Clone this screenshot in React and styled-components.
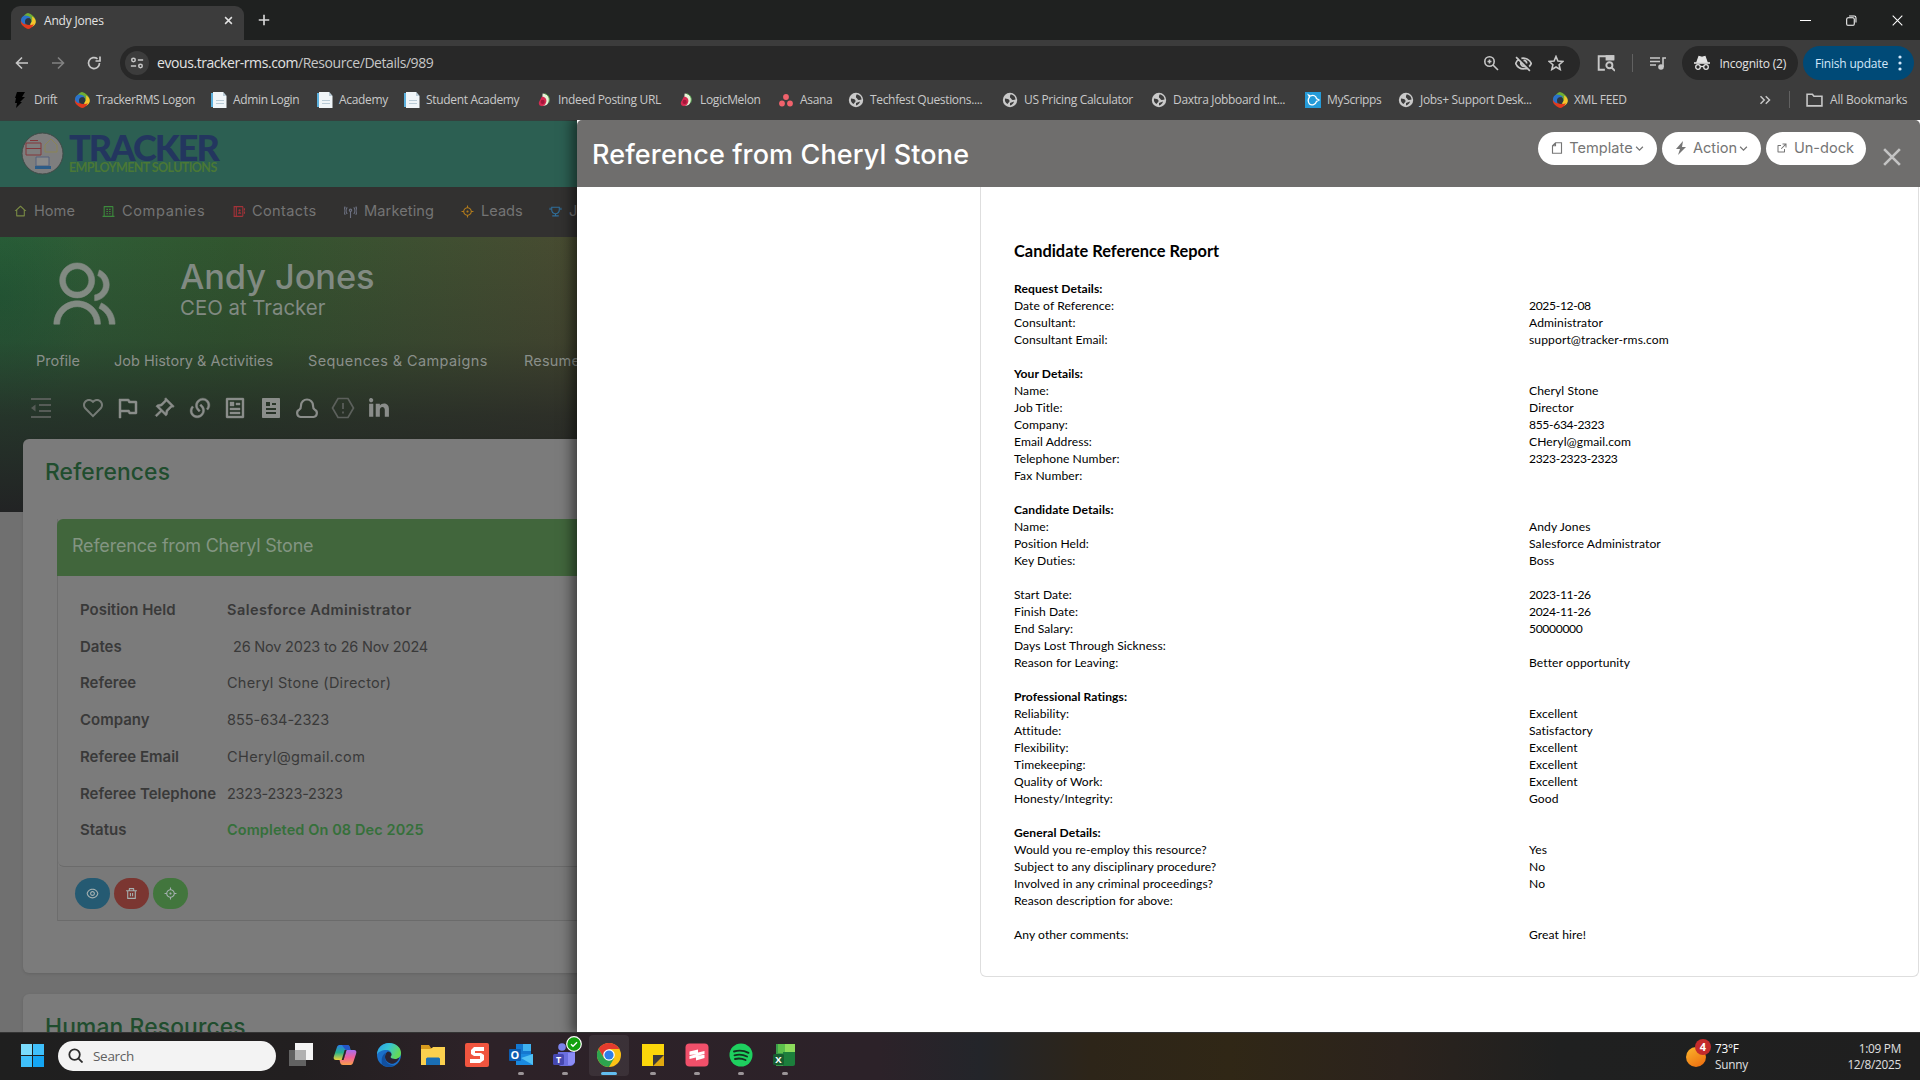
import React from "react";
import styled, { createGlobalStyle } from "styled-components";
import {
  RiGroupLine, RiHeartLine, RiFlagLine, RiPushpinLine, RiArticleLine, RiArticleFill,
  RiLinkedinFill, RiEyeLine, RiDeleteBinLine, RiExternalLinkLine, RiTrophyLine, RiLinksLine,
  RiFocus3Line, RiContactsBookLine, RiBuilding4Line, RiHome2Line,
} from "react-icons/ri";

const ui = `"Open Sans", "Noto Sans", sans-serif`;
const brand = `Inter, "Open Sans", sans-serif`;
const doc = `Lato, "Open Sans", sans-serif`;

const Global = createGlobalStyle`
  * { box-sizing: border-box; }
  body { margin: 0; background: #1f2020; overflow: hidden; }
  svg { display: block; flex: none; }
`;

const Screen = styled.div`
  width: 1920px; height: 1080px; display: flex; flex-direction: column;
  overflow: hidden; font-family: ${ui}; white-space: nowrap;
`;

/* ---------- browser chrome ---------- */
const TabStrip = styled.header`
  height: 40px; flex: none; background: #1f2120; display: flex; align-items: flex-end; padding-left: 11px;
`;
const Tab = styled.div`
  width: 233px; height: 34px; background: #3c3c3c; border-radius: 9px 9px 0 0; color: #e3e3e3;
  display: flex; align-items: center; padding: 0 11px 5px 9px; font-size: 12px; letter-spacing: -0.2px;
  svg:last-child { margin-left: auto; }
`;
const TabTitle = styled.span`margin-left: 8px;`;
const NewTab = styled.div`height: 40px; margin-left: 14px; display: flex; align-items: center;`;
const WindowButtons = styled.div`
  margin-left: auto; height: 40px; width: 138px; display: flex; align-items: center; gap: 35px;
  padding-left: 18px;
`;
const Toolbar = styled.div`
  height: 46px; flex: none; background: #3c3c3c; display: flex; align-items: center; padding: 0 6px 0 14px;
`;
const NavButton = styled.div`width: 16px; flex: none; margin-right: 20px; opacity: ${(p) => (p.$off ? 0.5 : 1)};`;
const AddressBar = styled.div`
  width: 1460px; height: 34px; flex: none; margin-left: -2px; border-radius: 17px; background: #282828; display: flex; align-items: center;
  padding: 0 16px 0 5px; color: #e3e3e3; font-size: 14px; letter-spacing: -0.43px;
`;
const SiteInfo = styled.div`
  width: 24px; height: 24px; border-radius: 50%; background: #3c3c3c; display: grid; place-items: center; margin-right: 8px;
`;
const Url = styled.span`padding-bottom: 2px;`;
const UrlPath = styled.span`color: #c7c7c7;`;
const AddressActions = styled.div`margin-left: auto; display: flex; gap: 16px;`;
const Rule = styled.i`width: 1px; height: ${(p) => p.$h}px; margin-left: ${(p) => p.$ml || 0}px; background: #616161; flex: none;`;
const ToolIcons = styled.div`display: flex; flex: none; align-items: center; gap: 17px; margin-left: 17px; width: 85px;`;
const Pill = styled.div`
  height: 34px; width: ${(p) => p.$w}px; flex: none; border-radius: 17px; background: ${(p) => p.$bg};
  display: flex; align-items: center; justify-content: space-between; padding: 0 ${(p) => p.$pad}px; color: ${(p) => p.$ink};
  font-size: 12px; letter-spacing: -0.2px;
  & + & { margin-left: 5px; }
`;
const Bookmarks = styled.div`
  height: 34px; flex: none; background: #3c3c3c; display: flex; align-items: center; padding: 0 0 7px 12px;
  color: #c9c9c9; font-size: 12px; letter-spacing: -0.33px;
`;
const Bookmark = styled.div`width: ${(p) => p.$w}px; display: flex; align-items: center; gap: 6px; flex: none;`;
const BookmarkEnd = styled.div`margin-left: auto; display: flex; align-items: center; width: 161px;`;
const AllBookmarks = styled.div`display: flex; align-items: center; gap: 7px; margin-left: 16px; letter-spacing: -0.2px;`;

/* ---------- application ---------- */
const AppArea = styled.main`height: 912px; flex: none; display: flex; overflow: hidden; background: #707070; font-family: ${brand};`;
const Behind = styled.section`width: 577px; height: 912px; flex: none; overflow: hidden; display: flex; flex-direction: column;`;
const BrandBar = styled.div`height: 67px; flex: none; background: #2c5f52; border-top: 1px solid #35403d; display: flex; align-items: center; padding: 0 0 1px 21px;`;
const BrandWords = styled.div`margin-left: 5px; display: flex; flex-direction: column;`;
const BrandName = styled.div`font: 900 36px/29px ${doc}; letter-spacing: -1.9px; color: #23365f;`;
const BrandSub = styled.div`font: 700 12.5px/12px ${doc}; letter-spacing: -0.6px; color: #4a7836;`;
const MainNav = styled.nav`height: 50px; flex: none; background: #323130; display: flex; align-items: center; padding: 0 0 2px 14px; color: #747474; font-size: 14.6px; letter-spacing: 0.1px;`;
const NavItem = styled.div`width: ${(p) => p.$w}px; flex: none; display: flex; align-items: center; gap: 7px; letter-spacing: ${(p) => p.$ls || 0}px; svg { color: ${(p) => p.$c}; }`;
const Banner = styled.div`
  height: 275px; flex: none; display: flex; flex-direction: column; color: #818a82;
  background:
    linear-gradient(180deg, rgba(34,35,36,0) 0%, rgba(34,35,36,0.22) 38%, rgba(34,35,36,0.7) 65%, #222324 100%),
    radial-gradient(ellipse 90px 120px at 0 60px, rgba(32,88,52,0.8), transparent),
    linear-gradient(90deg, #2d5f39 0%, #31562f 40%, #3d5031 70%, #484b31 100%);
`;
const Person = styled.div`display: flex; padding: 20px 0 0 48px; height: 109px; > svg { margin-top: 3px; }`;
const PersonText = styled.div`margin-left: 62px;`;
const PersonName = styled.div`font-size: 34.4px; font-weight: 500; line-height: 40px; letter-spacing: -0.1px;`;
const PersonRole = styled.div`font-size: 20.4px; line-height: 24px; margin-top: -1px;`;
const SubTabs = styled.div`display: flex; padding-left: 36px; font-size: 14.5px; line-height: 30px; color: #8a8f8a;`;
const SubTab = styled.span`width: ${(p) => p.$w}px; flex: none; letter-spacing: ${(p) => p.$ls || 0}px;`;
const QuickIcons = styled.div`
  display: flex; align-items: center; gap: 11.7px; padding: 19px 0 0 29px; color: #8a8d8a;
  svg:first-child { margin-right: 16px; }
`;
const Cards = styled.div`margin: -73px 0 0 23px; display: flex; flex-direction: column; gap: 21px;`;
const Card = styled.div`
  height: ${(p) => p.$h}px; flex: none; width: 600px; background: #7b7b7b; border-radius: 6px; padding: 17px 0 0 22px;
  box-shadow: 0 1px 3px rgba(0,0,0,0.12);
`;
const CardTitle = styled.h2`margin: 0; font-size: 22.8px; line-height: 32px; font-weight: 500; color: #204d2e; letter-spacing: 0.15px;`;
const RefBox = styled.div`margin: 31px 0 0 12px; width: 570px; border-left: 1px solid #6d6d6d;`;
const RefHead = styled.div`margin-left: -1px; height: 57px; background: #41663c; border-radius: 6px 0 0 0; padding-left: 15px; font-size: 18px; line-height: 53px; letter-spacing: -0.2px; color: #839582;`;
const RefBody = styled.dl`margin: 0; height: 291px; padding: 16px 0 0 22px; border-bottom: 1px solid #6b6b6b; border-radius: 0 0 0 6px;`;
const RefRow = styled.div`
  display: grid; grid-template-columns: 147px 1fr; font-size: 14.5px; line-height: 36.7px; color: #393939;
  dt { font-weight: 600; font-size: 15px; letter-spacing: 0; }
  dd {
    margin: 0; font-weight: ${(p) => (p.$strong ? 600 : 400)}; color: ${(p) => p.$c || "#393939"};
    padding-left: ${(p) => p.$in || 0}px; letter-spacing: ${(p) => p.$ls || 0}px;
  }
`;
const RefFoot = styled.div`height: 54px; display: flex; gap: 4px; padding: 11px 0 0 17px; border-bottom: 1px solid #6b6b6b; background: #797979;`;
const RoundBtn = styled.div`width: 35px; height: 31px; border-radius: 16px; background: ${(p) => p.$c}; color: #a5b0b0; display: grid; place-items: center;`;

/* ---------- docked panel ---------- */
const Panel = styled.section`
  width: 1343px; height: 912px; flex: none; background: #fff; position: relative;
  box-shadow: -2px 0 12px 3px rgba(0,0,0,0.5); display: flex; flex-direction: column;
`;
const PanelHead = styled.div`
  height: 67px; flex: none; background: #6f6e6d; border-radius: 5px 5px 0 0; display: flex; padding-left: 15px; color: #fff;
`;
const PanelTitle = styled.h1`margin: 0; font-size: 27px; line-height: 70px; font-weight: 500; letter-spacing: 0.12px;`;
const PanelActions = styled.div`margin-left: auto; display: flex; gap: 5px; padding: 12px 19px 0 0;`;
const PanelBtn = styled.div`
  width: ${(p) => p.$w}px; height: 33px; border-radius: 17px; background: #fff; color: #757575; display: flex;
  align-items: center; justify-content: center; font-size: 14.6px; padding-bottom: 1px;
`;
const BtnLabel = styled.span`margin: 0 2px 0 6px; padding-bottom: 1px;`;
const CloseMark = styled.div`margin: 16px 0 0 12px;`;
const Report = styled.article`
  margin-left: 403px; width: 939px; height: 790px; border: 1px solid #dedede; border-top: 0; border-radius: 0 0 6px 6px;
  padding: 51px 0 0 33px; color: #000; font-family: ${doc};
`;
const ReportTitle = styled.h3`margin: 0 0 16px; font-size: 16.4px; line-height: 26px; font-weight: 700;`;
const Line = styled.div`
  display: grid; grid-template-columns: 515px 1fr; height: 17px; line-height: 17px; font-size: 12.1px; letter-spacing: 0.07px;
  font-weight: ${(p) => (p.$head ? 700 : 400)};
`;
const Value = styled.span`letter-spacing: ${(p) => (p.$digits ? "-0.33px" : "0.1px")};`;

/* ---------- taskbar ---------- */
const Taskbar = styled.footer`
  height: 48px; flex: none; display: flex; align-items: center; padding: 0 19px 2px 21px; border-top: 1px solid #343434;
  background: linear-gradient(90deg, #1f1f1f 0, #221f20 300px, #2d2228 480px, #2c2229 880px, #23252a 980px, #2d2519 1090px, #302716 1230px, #2b231d 1400px, #1f2020 1560px, #1f1f1f 100%);
`;
const SearchBox = styled.div`
  width: 218px; height: 30px; margin: 0 5px 0 14px; border-radius: 15px; background: #f3f3f3; display: flex; align-items: center;
  gap: 10px; padding-left: 10px; font-size: 13.5px; letter-spacing: -0.3px; color: #5f5f5f;
`;
const TaskApps = styled.div`display: flex; gap: 4px;`;
const TaskApp = styled.div`
  width: 40px; height: 41px; border-radius: 4px; display: flex; flex-direction: column; align-items: center; padding-top: 8px; position: relative;
  background: ${(p) => (p.$on ? "rgba(255,255,255,.07)" : "none")};
`;
const Running = styled.i`width: ${(p) => (p.$on ? 16 : 6)}px; height: 3px; border-radius: 2px; background: ${(p) => (p.$on ? "#62bdf0" : "#9b9598")}; margin-top: 5px;`;
const Tick = styled.div`position: absolute; left: 21px; top: 1px;`;
const Weather = styled.div`margin-left: auto; display: flex; align-items: center; gap: 4px;`;
const Stack = styled.div`
  font-size: 11.8px; line-height: 16px; color: #e0e0e0; letter-spacing: -0.25px; text-align: ${(p) => p.$a || "left"};
  width: ${(p) => p.$w}px; strong { font-weight: 500; color: #fff; }
`;

/* ---------- drawings ---------- */
const L = ({ s = 16, w = 1.6, c = "#c7c7c7", v = 16, children }) => (
  <svg width={s} height={s} viewBox={`0 0 ${v} ${v}`} fill="none" stroke={c} strokeWidth={w}>{children}</svg>
);
const TrackerIcon = () => (
  <svg width="16" height="16" viewBox="0 0 16 16">
    <path d="M8 0C11.500 1 15.500 4 15.800 8c0 2-1.200 4-2.800 5.200L10.200 10.500C12 8 11 5.500 8.500 4.200L3 4.500C4 2 6 .5 8 0z" fill="#6fae35" />
    <path d="M12 3.500c3 1.500 4 4 3.700 6-.5 2.500-2.700 4-4.200 4.500L10 11c2.500-2 2.500-5 2-7.500z" fill="#f6c42c" />
    <path d="M14 11c-1.500 3.500-4 5-6 5C4.500 14.500 1 12 .8 9c0-1 .2-2 .7-3 1 3.500 4 6 8 6 2 0 3.500-.3 4.500-1z" fill="#e23a1d" />
    <path d="M1 7.500C.8 5 2.500 3 5 2.600c2.500 0 5 1 6.500 3C8 4.500 5 6 5 9c0 1 .3 1.700.8 2.400C3 11 1.300 9.500 1 7.500z" fill="#2a72c9" />
    <circle cx="8.200" cy="8.300" r="3" fill="#2c3540" />
  </svg>
);
const PageIcon = () => (
  <svg width="16" height="16" viewBox="0 0 16 16"><path d="M0 1h3v14H0z" fill="#5bb0dd" /><path d="M2 0h10l3.500 4v12H2z" fill="#f0f5f8" /><path d="M12 0v4h3.500zM5 8h8v1H5zM5 11h8v1H5z" fill="#b9cbd6" /></svg>
);
const MelonIcon = () => (
  <svg width="15" height="16" viewBox="0 0 16 16"><path d="M6 1c5 0 8 4 7 8-1 4-5 6-8 5z" fill="#e8f2d8" /><path d="M8 1c4.500 1.500 6 5.500 4.500 10" fill="none" stroke="#4f9e4a" /><path d="M5 4.500c3-.5 5.500 2 5 5C9.500 12.500 7.500 15 4.500 14.500 2 14 1 11 3 8.500z" fill="#d52b52" /><circle cx="6" cy="10" r="2.200" fill="#a5163a" /></svg>
);
const Globe = () => (
  <svg width="16" height="16" viewBox="0 0 16 16"><circle cx="8" cy="8" r="7.200" fill="#c9c9c9" /><path d="M3 6.500c2 .5 4 0 4.500 2 .3 1.500-1 2-2 3.500C3.500 11 2.500 9 3 6.500zM8.500 2.500c3 0 5 2.500 5 5C12 8 10 8.500 9.500 7 9 6 7 6 8.500 2.500zM8 11l4-1.500c-.5 2-2 3.500-4 4z" fill="#3c3c3c" /></svg>
);
const bookmarkIcons = {
  drift: <svg width="16" height="16" viewBox="0 0 16 16"><path d="M5 0h8l-3 5h3L8 10h2l-6 6 1-5H3l1-5H3z" fill="#000" /></svg>,
  tracker: <TrackerIcon />, page: <PageIcon />, melon: <MelonIcon />, globe: <Globe />,
  asana: <svg width="16" height="16" viewBox="0 0 16 16" fill="#f0626c"><circle cx="8" cy="5" r="2.900" /><circle cx="4" cy="11.500" r="2.900" /><circle cx="12" cy="11.500" r="2.900" /></svg>,
  scripps: <svg width="16" height="16" viewBox="0 0 16 16"><path d="M0 0h16v16H0z" fill="#259bd8" /><path d="M3.500 3l2 1C8.500 2.500 11 4 11.500 6.500L14 8l-2.500 1.500C10.500 12.500 7 14 4.500 12 3 10 3 7 4.500 5z" fill="none" stroke="#fff" strokeWidth="1.300" /></svg>,
};
const bookmarks = [
  ["drift", "Drift", 62], ["tracker", "TrackerRMS Logon", 137], ["page", "Admin Login", 106], ["page", "Academy", 87],
  ["page", "Student Academy", 133], ["melon", "Indeed Posting URL", 142], ["melon", "LogicMelon", 99], ["asana", "Asana", 70],
  ["globe", "Techfest Questions....", 154], ["globe", "US Pricing Calculator", 149], ["globe", "Daxtra Jobboard Int...", 154],
  ["scripps", "MyScripps", 93], ["globe", "Jobs+ Support Desk...", 154], ["tracker", "XML FEED", 90],
];

const Badge = () => (
  <svg width="43" height="43" viewBox="0 0 43 43">
    <circle cx="21.500" cy="21.500" r="20.500" fill="#7e7e7e" stroke="#3f4a47" />
    <path d="M5 11h15v12H5zM5 16.500h15M9 8.500h8" fill="none" stroke="#83373a" />
    <path d="M24 20V13l6-6 6 6v7z" fill="none" stroke="#8a8455" />
    <path d="M15 25h13v9H15z" fill="#8a8a8a" stroke="#55607d" /><path d="M14 34h16v3H14z" fill="#2c5c88" />
  </svg>
);

const nav = [
  [<RiHome2Line size={13} />, "Home", "#7a8a44", 88, 0], [<RiBuilding4Line size={13} />, "Companies", "#3c8a3c", 130, 0.6],
  [<RiContactsBookLine size={13} />, "Contacts", "#a23238", 112, 0.35],
  [<L s={13} c="#6c7080" w="1.400"><path d="M4 3C2 5 2 9 4 11M12 3c2 2 2 6 0 8M1.500 2C-.3 5 -.3 9 1.500 12M14.500 2c1.800 3 1.800 7 0 10M8 7v9" /><circle cx="8" cy="6.500" r="1.500" /></L>, "Marketing", "#777", 117, 0.1],
  [<RiFocus3Line size={13} />, "Leads", "#b07a1c", 88, 0], [<RiTrophyLine size={13} />, "Jobs", "#2f6f9c", 60, 0],
];

const details = [
  ["Position Held", "Salesforce Administrator", { $strong: true, $ls: 0.45 }],
  ["Dates", "26 Nov 2023 to 26 Nov 2024", { $in: 6, $ls: -0.2 }],
  ["Referee", "Cheryl Stone (Director)", { $ls: 0.27 }],
  ["Company", "855-634-2323", { $ls: -0.02 }],
  ["Referee Email", "CHeryl@gmail.com", { $ls: 0.4 }],
  ["Referee Telephone", "2323-2323-2323", { $ls: -0.25 }],
  ["Status", "Completed On 08 Dec 2025", { $strong: true, $c: "#35703a", $ls: 0.1 }],
];

const report = [
  ["Request Details:"], ["Date of Reference:", "2025-12-08"], ["Consultant:", "Administrator"], ["Consultant Email:", "support@tracker-rms.com"], [],
  ["Your Details:"], ["Name:", "Cheryl Stone"], ["Job Title:", "Director"], ["Company:", "855-634-2323"], ["Email Address:", "CHeryl@gmail.com"],
  ["Telephone Number:", "2323-2323-2323"], ["Fax Number:", ""], [],
  ["Candidate Details:"], ["Name:", "Andy Jones"], ["Position Held:", "Salesforce Administrator"], ["Key Duties:", "Boss"], [],
  ["Start Date:", "2023-11-26"], ["Finish Date:", "2024-11-26"], ["End Salary:", "50000000"], ["Days Lost Through Sickness:", ""],
  ["Reason for Leaving:", "Better opportunity"], [],
  ["Professional Ratings:"], ["Reliability:", "Excellent"], ["Attitude:", "Satisfactory"], ["Flexibility:", "Excellent"], ["Timekeeping:", "Excellent"],
  ["Quality of Work:", "Excellent"], ["Honesty/Integrity:", "Good"], [],
  ["General Details:"], ["Would you re-employ this resource?", "Yes"], ["Subject to any disciplinary procedure?", "No"],
  ["Involved in any criminal proceedings?", "No"], ["Reason description for above:", ""], [], ["Any other comments:", "Great hire!"],
];

const Chev = () => <L s={9} c="#757575"><path d="M2 5l6 6 6-6" strokeWidth="2.200" /></L>;
const I24 = ({ children }) => <svg width="24" height="24" viewBox="0 0 24 24">{children}</svg>;
const Glyph = (p) => <text fontFamily="Open Sans, sans-serif" fontWeight="700" fill="#fff" textAnchor="middle" {...p} />;

const taskApps = [
  ["task", 0, <I24><path d="M0 7h17v16H0z" fill="#626262" /><path d="M6 0h18v17H6z" fill="#f4f4f4" /><path d="M6 7h11v10H6z" fill="#b0b0b0" /></I24>],
  ["copilot", 0, <I24>
    <defs>
      <linearGradient id="cpa" x1="0" y1="0" x2="0" y2="1"><stop offset="0" stopColor="#2a7de8" /><stop offset=".5" stopColor="#27b08a" /><stop offset="1" stopColor="#f0d33c" /></linearGradient>
      <linearGradient id="cpb" x1="0" y1="0" x2="0" y2="1"><stop offset="0" stopColor="#a66df0" /><stop offset=".5" stopColor="#f0609a" /><stop offset="1" stopColor="#f9a04a" /></linearGradient>
    </defs>
    <path d="M7 2h7c2 0 2.500 1 3 3l.5 2h-4L10.500 17H3c-2 0-3-1.500-2-4L4 4c.6-1.400 1.500-2 3-2z" fill="url(#cpa)" />
    <path d="M17 22h-7c-2 0-2.500-1-3-3l-.5-2h4L13.500 7H21c2 0 3 1.500 2 4l-3 9c-.6 1.400-1.500 2-3 2z" fill="url(#cpb)" />
    <path d="M9 2h5c2 0 2.500 1 3 3l.5 2h-5z" fill="#2456c8" />
    <path d="M13.500 7h-1.800L8.700 17h1.800z" fill="#2a2226" />
  </I24>],
  ["edge", 0, <I24>
    <defs><linearGradient id="eg" x1="0" y1="0" x2="1" y2=".4"><stop offset="0" stopColor="#2b9be8" /><stop offset=".5" stopColor="#36c3d4" /><stop offset="1" stopColor="#63d957" /></linearGradient></defs>
    <circle cx="12" cy="12" r="12" fill="#1b6fc9" />
    <path d="M0 12C0 5 5 0 12 0c7 0 12 4.500 12 10 0 3.500-2.500 6-6 6-2.500 0-4.500-1-4.500-2 0-.7 1-1.200 1-3 0-2.500-2.500-4-5-4C5 7 .5 9 0 12z" fill="url(#eg)" />
    <path d="M8 14c0-3 1.500-4.500 3-5.500 2 .3 3.500 1.500 3.500 3 0 1.500-1 1.500-1 2.500s2 2 4.500 2c2 0 3.500-.8 4.500-1.800C21 19 17 21.500 13.500 20.500 10.500 19.500 8 17 8 14z" fill="#2a2433" />
    <path d="M8 14c0 4.500 4 8.500 9.500 8.500C14 24.500 9 24.500 5 21.500 4 16 5 12 9 9.500 8.200 11 8 12.500 8 14z" fill="#1150a0" />
  </I24>],
  ["files", 0, <I24><path d="M0 2h8l2 3h14v17H0z" fill="#d79a1c" /><path d="M0 6h10l2-2h12v18H0z" fill="#fbd04e" /><path d="M5 16c0-1 1-1.500 2-1.500h10c1 0 2 .5 2 1.500v6H5z" fill="#1a6fb5" /></I24>],
  ["snagit", 0, <I24><rect width="24" height="24" rx="2" fill="#f0553f" /><path d="M19 4H9L6 7v4l3 2h6v3H5v4h10l4-3v-5l-3-2H10V8h9z" fill="#fff" /></I24>],
  ["outlook", 1, <I24><path d="M7 1h15v14H7z" fill="#1478d0" /><path d="M14 1h8v7h-8z" fill="#3fb2f0" /><path d="M7 11l17 0v11H7z" fill="#1a8ae0" /><path d="M24 11v11L12 15z" fill="#50c0f4" /><rect y="6" width="12" height="12" rx="1" fill="#0c5cb0" /><Glyph x="6" y="16" fontSize="11">O</Glyph></I24>],
  ["teams", 1, <I24><circle cx="9" cy="4" r="3.800" fill="#7b83eb" /><path d="M5 9h17v8c0 4-2 6-6 6H9c-3 0-5-2-5-6z" fill="#6c6fe0" /><path d="M15 10h7v8c0 2-2 4-4 4h-3z" fill="#8b8cf5" /><rect y="11" width="11" height="11" rx="1.500" fill="#4648b0" /><Glyph x="5.500" y="19.500" fontSize="9">T</Glyph></I24>],
  ["chrome", 2, <I24><circle cx="12" cy="12" r="12" fill="#fbc116" /><path d="M1.600 6A12 12 0 0 1 22.400 6H12L7 15z" fill="#e33b2e" /><path d="M1.600 6A12 12 0 0 0 12 24l5.200-9H7z" fill="#2da44e" /><circle cx="12" cy="12" r="5.800" fill="#fff" /><circle cx="12" cy="12" r="4.600" fill="#2f7de9" /></I24>],
  ["notes", 1, <I24><path d="M1 1h22v22H1z" fill="#fbd60a" /><path d="M12 12h11v11H12z" fill="#e0a910" /><path d="M12 12h11L12 23z" fill="#3a3a3a" /></I24>],
  ["scribe", 1, <I24><rect x=".5" y=".5" width="23" height="23" rx="4" fill="#f1506a" /><path d="M4.500 8.500L13 6.500v3l6.500-1.500v3l-7.500 1.800 7.500-1v3.200L11 17.500v-3L4.500 16v-3l7-1.700-7 .7z" fill="#fff" /></I24>],
  ["spotify", 1, <I24><circle cx="12" cy="12" r="11.500" fill="#1ed05f" /><path d="M5 8.500c5-1.500 10-1 14.500 1.300M5.500 12.300c4.500-1.200 8.500-.8 12.500 1.200M6 16c4-1 7-.6 10.500 1" fill="none" stroke="#14301f" strokeWidth="1.900" strokeLinecap="round" /></I24>],
  ["excel", 1, <I24><path d="M3 1h10v22H3z" fill="#3a9e4a" /><path d="M11 1h11v10H11z" fill="#8ddc5c" /><path d="M5 1h7v9H5z" fill="#5cc04c" /><path d="M10 9h12v12c0 1-1 2-2 2H10z" fill="#1c7f3c" /><rect x="0" y="11" width="11" height="11" rx="1.500" fill="#175c30" /><Glyph x="5.500" y="20" fontSize="9.500">X</Glyph></I24>],
];

export default function App() {
  return (
    <Screen>
      <Global />
      <TabStrip>
        <Tab>
          <TrackerIcon /><TabTitle>Andy Jones</TabTitle>
          <L s={9} c="#e3e3e3" w="2.600"><path d="M2 2l12 12M14 2L2 14" /></L>
        </Tab>
        <NewTab><L s={12} c="#d8d8d8" w="2.200"><path d="M8 1v14M1 8h14" /></L></NewTab>
        <WindowButtons>
          <L s={11} c="#fff" w="1.500"><path d="M0 8h16" /></L>
          <L s={11} c="#fff" w="1.500"><rect x="1" y="4" width="11" height="11" rx="2" /><path d="M4.500 1.500H12c2 0 2.500 1 2.500 2.500V11" /></L>
          <L s={11} c="#fff" w="1.500"><path d="M1 1l14 14M15 1L1 15" /></L>
        </WindowButtons>
      </TabStrip>
      <Toolbar>
        <NavButton><L><path d="M14 8H2.500M8 2.500L2.500 8 8 13.500" /></L></NavButton>
        <NavButton $off><L><path d="M2 8h11.500M8 2.500L13.500 8 8 13.500" /></L></NavButton>
        <NavButton><L w="1.700"><path d="M13.500 8A5.500 5.500 0 1 1 11.500 3.800M14 1.500V6H9.500" /></L></NavButton>
        <AddressBar>
          <SiteInfo><L s={14} w="1.700"><circle cx="4" cy="4.500" r="2" /><path d="M9 4.500h6M1 11.500h6" /><circle cx="12" cy="11.500" r="2" /></L></SiteInfo>
          <Url>evous.tracker-rms.com<UrlPath>/Resource/Details/989</UrlPath></Url>
          <AddressActions>
            <L><circle cx="6.500" cy="6.500" r="4.700" /><path d="M10 10l5 5M6.500 4.500v4M4.500 6.500h4" /></L>
            <L s={17}><path d="M1 2l13 13M4 4C2 5 1 6.500.7 8 2 11 4.500 13 8 13c1.500 0 2.500-.3 3.500-.8M6 3.200c4-.8 8 1.300 9.300 4.800-.5 1-1 2-2 2.800M5.500 7a3 3 0 0 0 4 3.500M8 5c2 0 3 1.500 3 3" /></L>
            <L><path d="M8 1.500l1.900 4.600 4.900.4-3.700 3.200 1.100 4.800L8 12l-4.200 2.500 1.100-4.800L1.200 6.500l4.900-.4z" /></L>
          </AddressActions>
        </AddressBar>
        <ToolIcons>
          <L s={18} w="1.700"><path d="M7 14H1.500V2h13v3" /><path d="M8.500 2h6v3h-6z" fill="#c7c7c7" /><circle cx="11" cy="10" r="2.700" /><path d="M13 12l3 3" /></L>
          <Rule $h={18} />
          <L><path d="M0 3h10M0 6.500h10M0 10h6M13 12V3h3" /><circle cx="11" cy="12" r="2" fill="#c7c7c7" /></L>
        </ToolIcons>
        <Pill $w={116} $bg="#282828" $pad={12} $ink="#e3e3e3">
          <L c="#e3e3e3" w="1.300"><path d="M0 8h16" strokeWidth="1.600" /><path d="M3 7l2-5.500 3 .8 3-.8L13 7z" fill="#e3e3e3" /><circle cx="4" cy="12" r="2.300" /><circle cx="12" cy="12" r="2.300" /><path d="M6.300 11.500h3.400" /></L>
          Incognito (2)
        </Pill>
        <Pill $w={111} $bg="#004a77" $pad={12} $ink="#d3e8fb">
          Finish update
          <svg width="4" height="16" viewBox="0 0 4 16" fill="#d3e8fb"><circle cx="2" cy="2" r="1.600" /><circle cx="2" cy="8" r="1.600" /><circle cx="2" cy="14" r="1.600" /></svg>
        </Pill>
      </Toolbar>
      <Bookmarks>
        {bookmarks.map(([icon, label, w]) => <Bookmark key={label} $w={w}>{bookmarkIcons[icon]}{label}</Bookmark>)}
        <BookmarkEnd>
          <L s={12} w="2"><path d="M2 3l5 5-5 5M9 3l5 5-5 5" /></L>
          <Rule $h={17} $ml={18} />
          <AllBookmarks><L s={17} w="1.500"><path d="M1 3h5l1.500 2H15v9H1z" /></L>All Bookmarks</AllBookmarks>
        </BookmarkEnd>
      </Bookmarks>

      <AppArea>
        <Behind>
          <BrandBar><Badge /><BrandWords><BrandName>TRACKER</BrandName><BrandSub>EMPLOYMENT SOLUTIONS</BrandSub></BrandWords></BrandBar>
          <MainNav>{nav.map(([icon, label, c, w, ls]) => <NavItem key={label} $c={c} $w={w} $ls={ls}>{icon}{label}</NavItem>)}</MainNav>
          <Banner>
            <Person>
              <RiGroupLine size={70} strokeWidth={0.2} />
              <PersonText><PersonName>Andy Jones</PersonName><PersonRole>CEO at Tracker</PersonRole></PersonText>
            </Person>
            <SubTabs>
              <SubTab $w={78}>Profile</SubTab>
              <SubTab $w={194}>Job History &amp; Activities</SubTab>
              <SubTab $w={216} $ls={0.4}>Sequences &amp; Campaigns</SubTab>
              <SubTab $w={70} $ls={0.2}>Resumes</SubTab>
            </SubTabs>
            <QuickIcons>
              <L s={24} v={24} c="#565c57" w="2"><path d="M2 3h20M10 9h12M10 15h12M2 21h20" /><path d="M6.500 8.500v7L2 12z" fill="#565c57" stroke="none" /></L>
              <RiHeartLine size={24} opacity=".8" /><RiFlagLine size={24} strokeWidth={0.5} /><RiPushpinLine size={24} strokeWidth={0.5} /><RiLinksLine size={24} strokeWidth={0.4} />
              <RiArticleLine size={24} strokeWidth={0.4} /><RiArticleFill size={24} />
              <L s={24} v={24} c="#8a8d8a" w="2.200"><path d="M5.500 21a4 4 0 0 1-1-7.600C6 12.500 6 11 6 9.500a6 6 0 0 1 12 0c0 1.500 0 3 1.500 3.900a4 4 0 0 1-1 7.600z" /></L>
              <L s={24} v={24} c="#5c605c" w="1.700"><path d="M7 2.500h10l5.500 9.500L17 21.500H7L1.500 12zM12 7v6M12 15.500v2" /></L>
              <RiLinkedinFill size={25} />
            </QuickIcons>
          </Banner>
          <Cards>
            <Card $h={534}>
              <CardTitle>References</CardTitle>
              <RefBox>
                <RefHead>Reference from Cheryl Stone</RefHead>
                <RefBody>{details.map(([k, v, p]) => <RefRow key={k} {...p}><dt>{k}</dt><dd>{v}</dd></RefRow>)}</RefBody>
                <RefFoot>
                  <RoundBtn $c="#255a72"><RiEyeLine size={13} /></RoundBtn>
                  <RoundBtn $c="#7b3631"><RiDeleteBinLine size={13} /></RoundBtn>
                  <RoundBtn $c="#42763d"><RiFocus3Line size={13} /></RoundBtn>
                </RefFoot>
              </RefBox>
            </Card>
            <Card $h={200}><CardTitle>Human Resources</CardTitle></Card>
          </Cards>
        </Behind>

        <Panel>
          <PanelHead>
            <PanelTitle>Reference from Cheryl Stone</PanelTitle>
            <PanelActions>
              <PanelBtn $w={119}><L s={12} c="#757575" w="1.500"><path d="M6 1h8v14H2V5zM6 1v4H2" /></L><BtnLabel>Template</BtnLabel><Chev /></PanelBtn>
              <PanelBtn $w={99}><svg width="12" height="14" viewBox="0 0 12 14"><path d="M8 0L1 8h4l-2 6 8-8H7z" fill="#757575" /></svg><BtnLabel>Action</BtnLabel><Chev /></PanelBtn>
              <PanelBtn $w={100}><RiExternalLinkLine size={12} /><BtnLabel>Un-dock</BtnLabel></PanelBtn>
              <CloseMark><L s={18} c="#c4c4c4" w="2.300"><path d="M1 1l14 14M15 1L1 15" /></L></CloseMark>
            </PanelActions>
          </PanelHead>
          <Report>
            <ReportTitle>Candidate Reference Report</ReportTitle>
            {report.map(([k, v], i) => (
              <Line key={i} $head={v === undefined}><span>{k}</span><Value $digits={/^[\d-]+$/.test(v || "")}>{v}</Value></Line>
            ))}
          </Report>
        </Panel>
      </AppArea>

      <Taskbar>
        <svg width="23" height="23" viewBox="0 0 23 23" fill="#3fc0fb"><path d="M0 0h11v11H0z" fill="#7bdcfd" /><path d="M12 0h11v11H12zM0 12h11v11H0z" /><path d="M12 12h11v11H12z" fill="#14a5f3" /></svg>
        <SearchBox><L s={15} c="#2c2c2c" w="1.900"><circle cx="7" cy="7" r="5.600" /><path d="M11 11l4.500 4.500" /></L>Search</SearchBox>
        <TaskApps>
          {taskApps.map(([id, run, art]) => (
            <TaskApp key={id} $on={run === 2}>
              {art}{run > 0 && <Running $on={run === 2} />}
              {id === "teams" && <Tick><svg width="16" height="16" viewBox="0 0 16 16"><circle cx="8" cy="8" r="7.300" fill="#13a10e" stroke="#fff" strokeWidth="1.200" /><path d="M5 8.200l2 2 4-4" fill="none" stroke="#fff" strokeWidth="1.400" /></svg></Tick>}
            </TaskApp>
          ))}
        </TaskApps>
        <Weather>
          <svg width="26" height="36" viewBox="0 0 26 36">
            <defs><linearGradient id="sun" x1="0" y1="0" x2=".6" y2="1"><stop offset="0" stopColor="#fbb62c" /><stop offset="1" stopColor="#ee7412" /></linearGradient></defs>
            <circle cx="11" cy="19" r="10" fill="url(#sun)" /><circle cx="18" cy="9" r="8" fill="#c42b2b" /><Glyph x="18" y="13" fontSize="11">4</Glyph>
          </svg>
          <Stack $w={110}><strong>73°F</strong><br />Sunny</Stack>
          <Stack $w={72} $a="right">1:09 PM<br />12/8/2025</Stack>
        </Weather>
      </Taskbar>
    </Screen>
  );
}
